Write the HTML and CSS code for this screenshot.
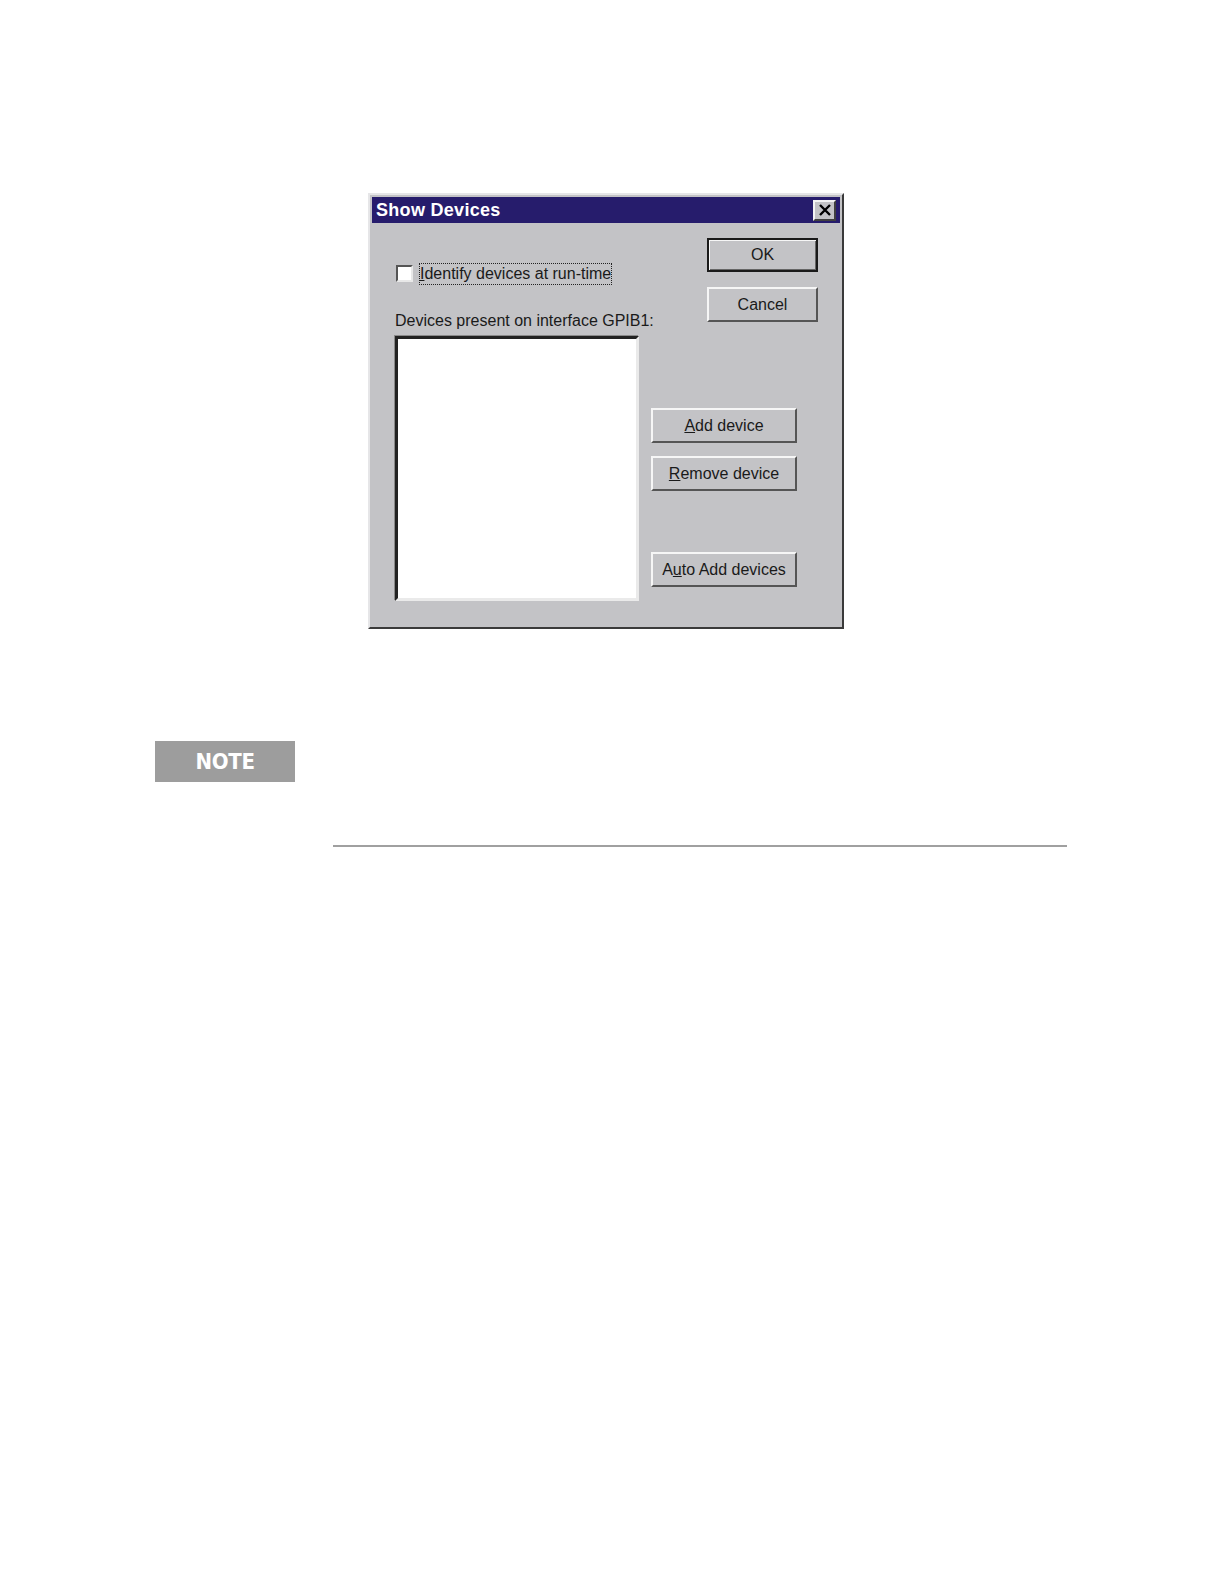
FILE: index.html
```html
<!DOCTYPE html>
<html>
<head>
<meta charset="utf-8">
<title>Show Devices</title>
<link rel="stylesheet" href="styles.css">
</head>
<body>
<div class="page">
  <div class="dialog">
    <div class="titlebar">
      <span class="title">Show Devices</span>
      <span class="close">
        <svg width="14" height="12" viewBox="0 0 14 12"><path d="M2 1 L12 11 M12 1 L2 11" stroke="#000" stroke-width="2.4" fill="none"/></svg>
      </span>
    </div>
    <div class="content">
      <div class="left">
        <div class="checkrow">
          <span class="checkbox"></span>
          <span class="focus"><u>I</u>dentify devices at run-time</span>
        </div>
        <div class="listlabel">Devices present on interface GPIB1:</div>
        <div class="listbox"></div>
      </div>
      <div class="right">
        <div class="btn default">OK</div>
        <div class="btn cancel">Cancel</div>
        <div class="btn wide add"><u>A</u>dd device</div>
        <div class="btn wide remove"><u>R</u>emove device</div>
        <div class="btn wide auto">A<u>u</u>to Add devices</div>
      </div>
    </div>
  </div>
  <div class="note">NOTE</div>
  <div class="rule"></div>
</div>
</body>
</html>
```

FILE: styles.css
```css
html, body {
  margin: 0;
  padding: 0;
  background: #ffffff;
}
.page {
  width: 1224px;
  height: 1584px;
  padding-top: 193px;
  box-sizing: border-box;
}
.dialog {
  margin-left: 368px;
  width: 476px;
  height: 436px;
  box-sizing: border-box;
  background: #c3c3c6;
  border-top: 2px solid #e6e6e8;
  border-left: 2px solid #e6e6e8;
  border-right: 2px solid #3a3a3a;
  border-bottom: 2px solid #3a3a3a;
  padding: 2px 2px 0 2px;
  font-family: "Liberation Sans", Arial, sans-serif;
  font-size: 16px;
  color: #1a1a1a;
}
.titlebar {
  height: 26px;
  background: #261c6c;
  display: flex;
  align-items: center;
  justify-content: space-between;
  padding: 0 4px 0 4px;
}
.title {
  color: #fff;
  font-weight: bold;
  font-size: 18px;
  letter-spacing: 0.3px;
}
.close {
  width: 19px;
  height: 17px;
  background: #c3c3c6;
  border-top: 2px solid #f4f4f4;
  border-left: 2px solid #f4f4f4;
  border-right: 2px solid #404040;
  border-bottom: 2px solid #404040;
  display: flex;
  align-items: center;
  justify-content: center;
}
.content {
  display: flex;
  padding-left: 23px;
}
.left {
  width: 244px;
  padding-top: 39px;
}
.checkrow {
  display: flex;
  align-items: center;
  height: 23px;
}
.checkbox {
  width: 13px;
  height: 13px;
  background: #fff;
  border-top: 2px solid #555;
  border-left: 2px solid #555;
  border-right: 2px solid #e8e8e8;
  border-bottom: 2px solid #e8e8e8;
  margin-left: 1px;
}
.focus {
  margin-left: 6px;
  border: 1px dotted #222;
  padding: 1px 0 1px 0;
  white-space: nowrap;
  line-height: 18px;
}
.listlabel {
  margin-top: 27px;
  white-space: nowrap;
  line-height: 18px;
}
.listbox {
  margin-top: 6px;
  width: 244px;
  height: 265px;
  box-sizing: border-box;
  background: #fff;
  border-top: 3px solid #222;
  border-left: 3px solid #222;
  border-right: 3px solid #eaeaea;
  border-bottom: 3px solid #eaeaea;
  box-shadow: -1px -1px 0 #8a8a8a;
}
.right {
  margin-left: 12px;
  width: 167px;
  padding-top: 15px;
  display: flex;
  flex-direction: column;
}
.btn {
  box-sizing: border-box;
  background: #c3c3c6;
  border-top: 2px solid #f6f6f6;
  border-left: 2px solid #f6f6f6;
  border-right: 2px solid #555;
  border-bottom: 2px solid #555;
  display: flex;
  align-items: center;
  justify-content: center;
  white-space: nowrap;
  color: #1a1a1a;
}
.default {
  align-self: flex-end;
  width: 111px;
  height: 34px;
  border: 2px solid #1a1a1a;
  box-shadow: inset 1px 1px 0 #f6f6f6, inset -1px -1px 0 #666;
}
.cancel {
  align-self: flex-end;
  width: 111px;
  height: 35px;
  margin-top: 15px;
}
.wide {
  width: 146px;
  height: 35px;
}
.add {
  margin-top: 86px;
}
.remove {
  margin-top: 13px;
}
.auto {
  margin-top: 61px;
}
.note {
  margin-top: 112px;
  margin-left: 155px;
  width: 140px;
  height: 41px;
  background: #9d9d9d;
  color: #fff;
  font-family: "DejaVu Sans Condensed", "DejaVu Sans", sans-serif;
  font-weight: bold;
  font-size: 22px;
  letter-spacing: -0.3px;
  display: flex;
  align-items: center;
  justify-content: center;
}
.rule {
  margin-top: 63px;
  margin-left: 333px;
  width: 734px;
  height: 2px;
  background: #a0a0a0;
}
```
